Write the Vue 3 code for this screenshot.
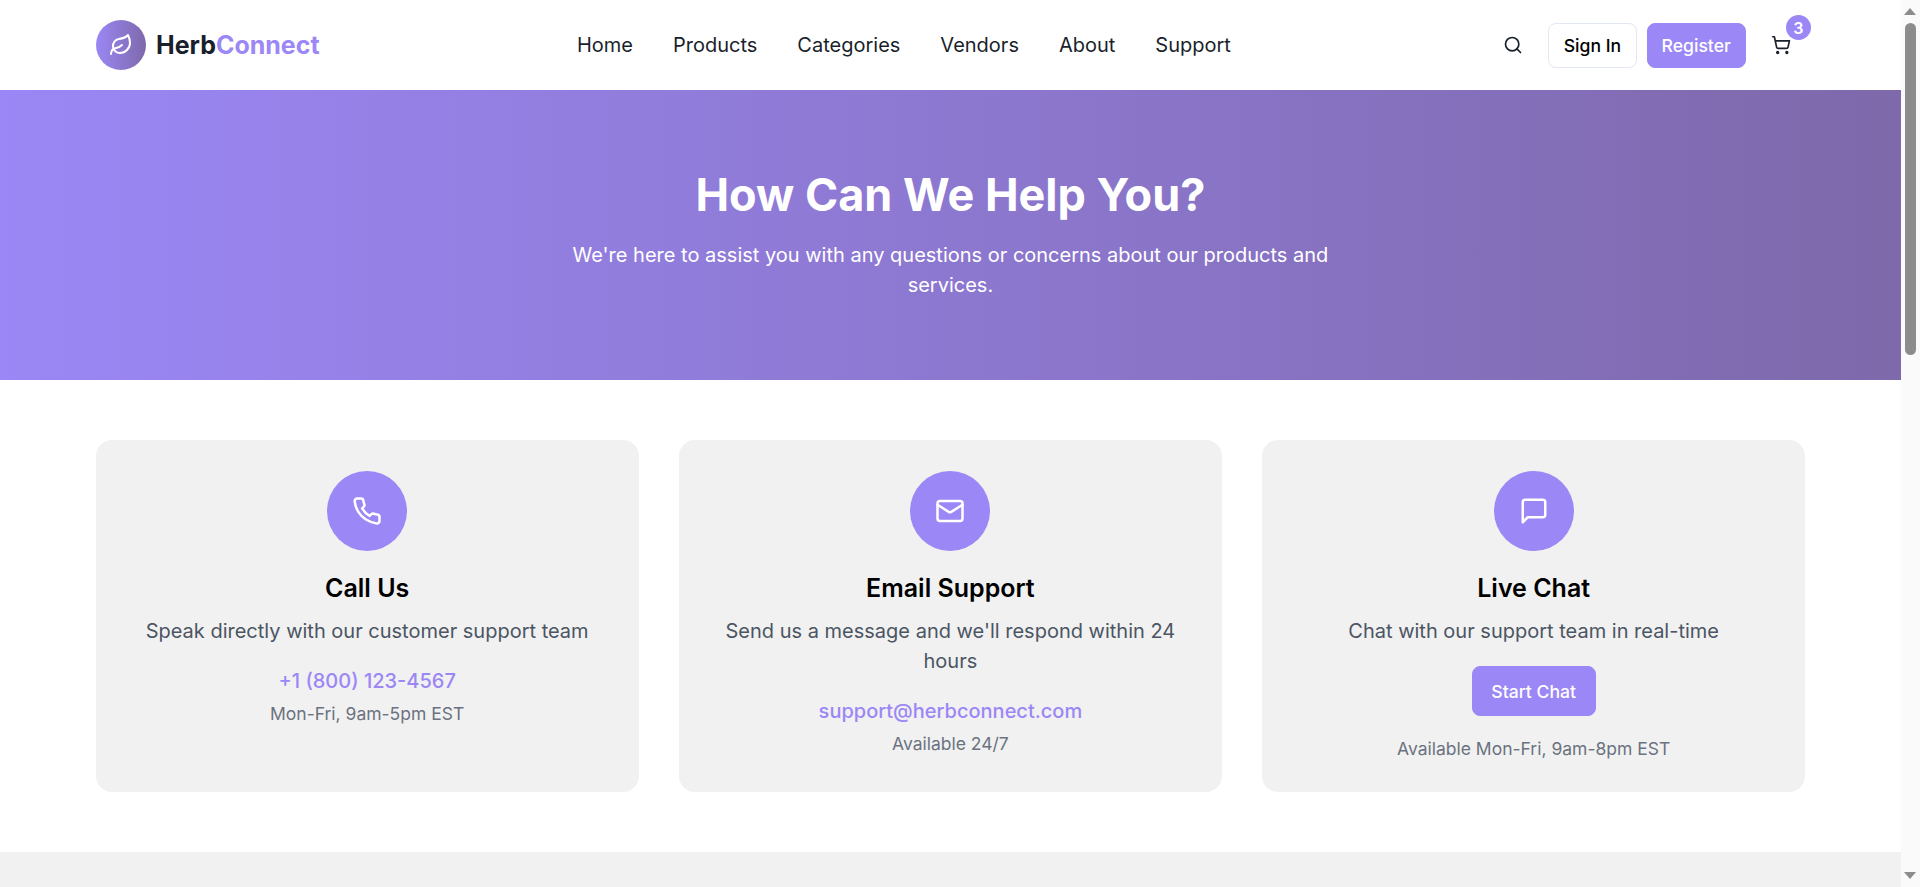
<script setup>
const cards = [
  { key: 'phone', title: 'Call Us', text: 'Speak directly with our customer support team', link: '+1 (800) 123-4567', note: 'Mon-Fri, 9am-5pm EST' },
  { key: 'mail', title: 'Email Support', text: "Send us a message and we'll respond within 24 hours", link: 'support@herbconnect.com', note: 'Available 24/7' },
  { key: 'chat', title: 'Live Chat', text: 'Chat with our support team in real-time', button: 'Start Chat', note: 'Available Mon-Fri, 9am-8pm EST' }
]
const nav = ['Home', 'Products', 'Categories', 'Vendors', 'About', 'Support']
</script>

<template>
  <div class="page">
    <main class="main">
      <header class="header">
        <a class="logo">
          <span class="logo-mark">
            <svg width="24" height="24" viewBox="0 0 24 24" class="ic">
              <path d="M11 20A7 7 0 0 1 9.8 6.1C15.5 5 17 4.48 19 2c1 2 2 4.18 2 8 0 5.5-4.78 10-10 10Z" />
              <path d="M2 21c0-3 1.85-5.36 5.08-6C9.5 14.52 12 13 13 12" />
            </svg>
          </span>
          <span class="logo-text">Herb<span class="accent">Connect</span></span>
        </a>
        <nav class="nav">
          <a v-for="item in nav" :key="item">{{ item }}</a>
        </nav>
        <div class="actions">
          <button class="icon-btn">
            <svg width="20" height="20" viewBox="0 0 24 24" class="ic">
              <circle cx="11" cy="11" r="8" />
              <path d="m21 21-4.3-4.3" />
            </svg>
          </button>
          <button class="btn outline">Sign In</button>
          <button class="btn solid">Register</button>
          <button class="icon-btn">
            <svg width="20" height="20" viewBox="0 0 24 24" class="ic">
              <circle cx="8" cy="21" r="1" />
              <circle cx="19" cy="21" r="1" />
              <path d="M2.05 2.05h2l2.66 12.42a2 2 0 0 0 2 1.58h9.78a2 2 0 0 0 1.95-1.57l1.65-7.43H5.12" />
            </svg>
            <span class="badge">3</span>
          </button>
        </div>
      </header>

      <section class="hero">
        <h1>How Can We Help You?</h1>
        <p>We're here to assist you with any questions or concerns about our products and services.</p>
      </section>

      <section class="cards">
        <article v-for="card in cards" :key="card.key" class="card">
          <div class="circle">
            <svg width="30" height="30" viewBox="0 0 24 24" class="ic">
              <path v-if="card.key === 'phone'" d="M22 16.92v3a2 2 0 0 1-2.18 2 19.79 19.79 0 0 1-8.63-3.07 19.5 19.5 0 0 1-6-6 19.79 19.79 0 0 1-3.07-8.67A2 2 0 0 1 4.11 2h3a2 2 0 0 1 2 1.72 12.84 12.84 0 0 0 .7 2.81 2 2 0 0 1-.45 2.11L8.09 9.91a16 16 0 0 0 6 6l1.27-1.27a2 2 0 0 1 2.11-.45 12.84 12.84 0 0 0 2.81.7A2 2 0 0 1 22 16.92z" />
              <template v-else-if="card.key === 'mail'">
                <rect x="2" y="4" width="20" height="16" rx="2" />
                <path d="m22 7-8.97 5.7a1.94 1.94 0 0 1-2.06 0L2 7" />
              </template>
              <path v-else d="M21 15a2 2 0 0 1-2 2H7l-4 4V5a2 2 0 0 1 2-2h14a2 2 0 0 1 2 2z" />
            </svg>
          </div>
          <h3>{{ card.title }}</h3>
          <p class="text">{{ card.text }}</p>
          <a v-if="card.link" class="link">{{ card.link }}</a>
          <button v-else class="chat-btn">{{ card.button }}</button>
          <p class="note">{{ card.note }}</p>
        </article>
      </section>

      <section class="lower"></section>
    </main>
    <aside class="scrollbar">
      <span class="arrow up"></span>
      <span class="thumb"></span>
      <span class="arrow down"></span>
    </aside>
  </div>
</template>

<style scoped>
.page {
  height: 100vh;
  overflow: hidden;
  display: flex;
  font-family: Inter, "Liberation Sans", sans-serif;
  color: #1a1f2c;
  background: #fff;
}
.main {
  flex: 1;
  min-width: 0;
  height: 100%;
  overflow: hidden;
}
.scrollbar {
  width: 19.2px;
  flex: none;
  background: #fafafa;
  display: flex;
  flex-direction: column;
  align-items: center;
  padding: 8px 0;
  box-sizing: border-box;
}
.arrow {
  width: 0;
  height: 0;
  border-left: 6.5px solid transparent;
  border-right: 6.5px solid transparent;
}
.up {
  border-bottom: 7px solid #8c8c8c;
}
.down {
  border-top: 7px solid #8c8c8c;
}
.thumb {
  width: 11px;
  height: 332px;
  margin-top: 8px;
  margin-bottom: auto;
  border-radius: 6px;
  background: #8c8c8c;
}
.ic {
  fill: none;
  stroke: currentColor;
  stroke-width: 2;
  stroke-linecap: round;
  stroke-linejoin: round;
  display: block;
}
.header {
  height: 90px;
  box-sizing: border-box;
  padding: 0 95px 0 96px;
  display: flex;
  align-items: center;
  justify-content: space-between;
  background: #fff;
}
.logo {
  display: flex;
  align-items: center;
  gap: 10px;
}
.logo-mark {
  width: 50px;
  height: 50px;
  border-radius: 50%;
  background: linear-gradient(90deg, #9b87f5, #7e69ab);
  color: #fff;
  display: flex;
  align-items: center;
  justify-content: center;
}
.logo-text {
  font-size: 25px;
  font-weight: 700;
}
.accent {
  color: #9b87f5;
}
.nav {
  display: flex;
  gap: 40px;
}
.nav a {
  font-size: 20px;
  font-weight: 400;
  color: #1a1f2c;
}
.actions {
  display: flex;
  align-items: center;
  gap: 10px;
}
button {
  font-family: inherit;
  cursor: pointer;
}
.icon-btn {
  width: 50px;
  height: 50px;
  background: none;
  border: 0;
  padding: 0;
  color: #1a1f2c;
  position: relative;
  display: flex;
  align-items: center;
  justify-content: center;
}
.btn {
  height: 45px;
  box-sizing: border-box;
  border-radius: 8px;
  font-size: 17.6px;
  font-weight: 500;
}
.outline {
  padding: 0 14.5px;
  background: #fff;
  border: 1px solid #e2e8f0;
  color: #000;
}
.solid {
  padding: 0 14px;
  background: #9b87f5;
  border: 1px solid #9b87f5;
  color: #fff;
}
.badge {
  position: absolute;
  top: -5px;
  right: -5px;
  width: 25px;
  height: 25px;
  border-radius: 50%;
  background: #9b87f5;
  color: #fff;
  font-size: 16px;
  font-weight: 600;
  display: flex;
  align-items: center;
  justify-content: center;
}
.hero {
  height: 290px;
  box-sizing: border-box;
  padding-top: 80px;
  background: linear-gradient(90deg, #9b87f5, #7e69ab);
  color: #fff;
  text-align: center;
}
.hero h1 {
  margin: 0 0 20px;
  font-size: 45px;
  line-height: 50px;
  font-weight: 700;
}
.hero p {
  margin: 0 auto;
  max-width: 800px;
  font-size: 20px;
  line-height: 30px;
}
.cards {
  padding: 60px 95.5px;
  display: grid;
  grid-template-columns: repeat(3, 1fr);
  gap: 40px;
}
.card {
  background: #f1f1f1;
  border-radius: 16px;
  padding: 31px 30px 30px;
  text-align: center;
  display: flex;
  flex-direction: column;
  align-items: center;
}
.circle {
  width: 80px;
  height: 80px;
  border-radius: 50%;
  background: #9b87f5;
  color: #fff;
  display: flex;
  align-items: center;
  justify-content: center;
  margin-bottom: 19px;
}
.card h3 {
  margin: 0 0 10px;
  font-size: 25px;
  line-height: 36px;
  font-weight: 600;
  color: #000;
}
.text {
  margin: 0 0 20px;
  font-size: 20px;
  line-height: 30px;
  color: #4b5563;
}
.link {
  font-size: 20px;
  line-height: 30px;
  font-weight: 500;
  color: #9b87f5;
}
.note {
  margin: 5px 0 0;
  font-size: 17.5px;
  line-height: 26px;
  color: #6b7280;
}
.chat-btn {
  width: 124px;
  height: 50px;
  padding: 0;
  border-radius: 8px;
  border: 1px solid #9b87f5;
  background: #9b87f5;
  color: #fff;
  font-size: 17.6px;
  font-weight: 500;
  margin-bottom: 15px;
}
.lower {
  height: 1412px;
  background: #f1f1f1;
}
</style>
